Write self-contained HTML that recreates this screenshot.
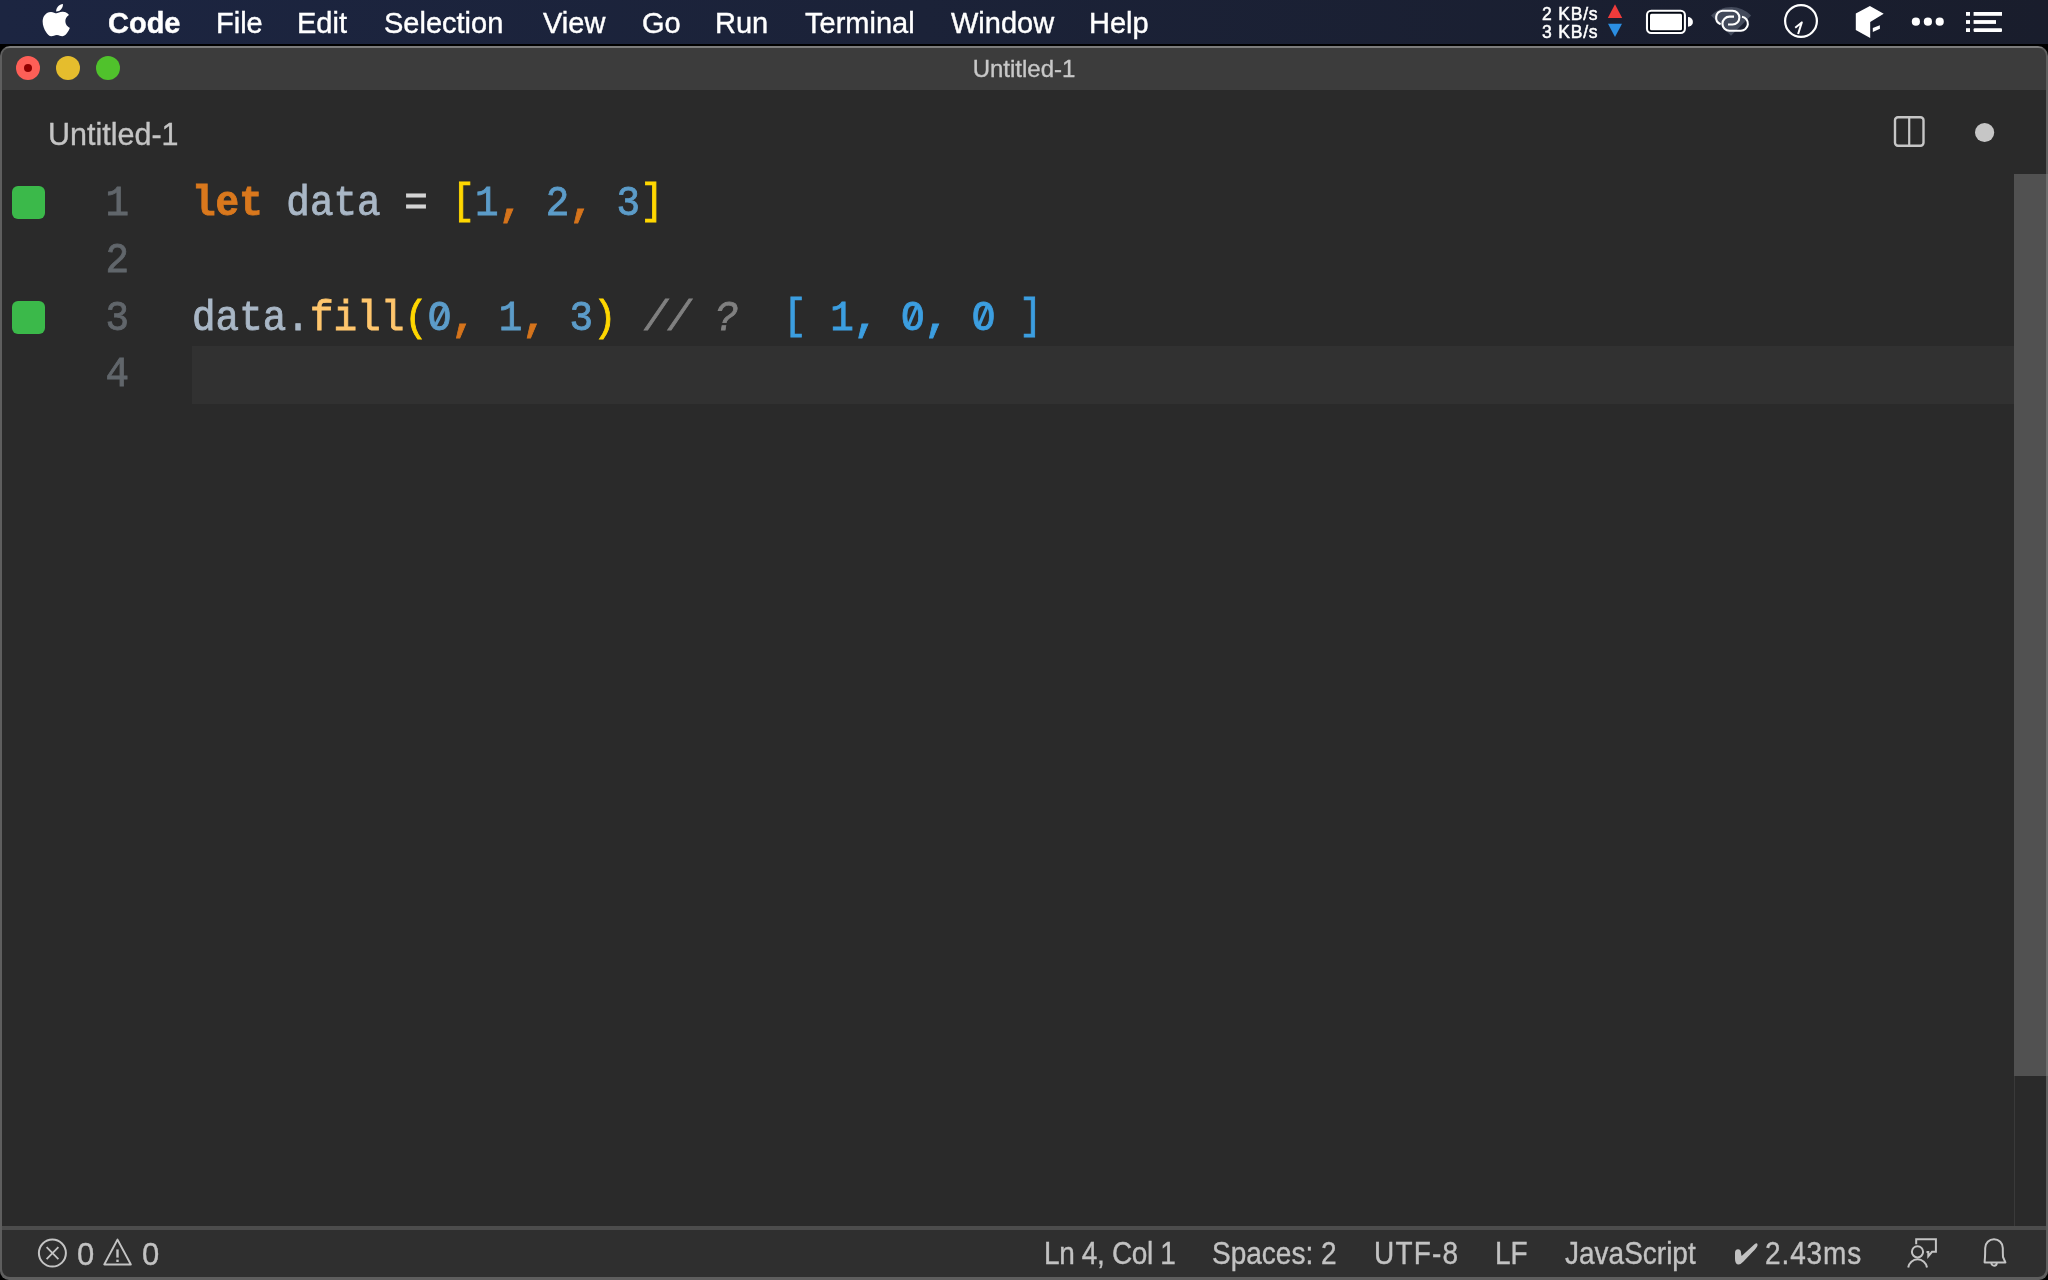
<!DOCTYPE html>
<html><head><meta charset="utf-8">
<style>
*{margin:0;padding:0;box-sizing:border-box}
html,body{width:2048px;height:1280px;overflow:hidden;background:#000}
body{position:relative;font-family:"Liberation Sans",sans-serif}
.mi,.st,.code,.abs{will-change:transform}
.tx{-webkit-text-stroke:0.35px currentColor}
.abs{position:absolute}
#menubar{left:0;top:0;width:2048px;height:44px;background:linear-gradient(90deg,#1c2541 0%,#1b2238 45%,#191d2c 100%)}
.mi{position:absolute;top:1px;height:44px;line-height:44px;color:#fff;font-size:29px;white-space:nowrap;-webkit-text-stroke:0.4px #fff}
#win{left:0;top:46px;width:2048px;height:1234px;background:linear-gradient(#7c7c7c 0,#7c7c7c 2px,#5e5e5e 2px);border-radius:10px 10px 9px 9px;overflow:hidden}
#titlebar{left:2px;top:2px;width:2044px;height:42px;background:#3c3c3c;border-radius:8px 8px 0 0}
#tabbar{left:2px;top:44px;width:2044px;height:84px;background:#2a2a2a}
#editor{left:2px;top:128px;width:2044px;height:1052px;background:#2a2a2a}
#sbborder{left:2px;top:1180px;width:2044px;height:4px;background:#4c4c4c}
#status{left:2px;top:1184px;width:2044px;height:47px;background:#2f2f2f;border-radius:0 0 8px 8px}
.code{position:absolute;font-family:"Liberation Mono",monospace;font-size:39.3px;line-height:57px;white-space:pre;height:57px;transform:scaleY(1.08);transform-origin:0 38.6px;-webkit-text-stroke:0.8px}
.ln{color:#61666b}
.st{-webkit-text-stroke:0.35px currentColor;position:absolute;top:1231px;height:47px;line-height:47px;color:#c2c2c2;font-size:28px;white-space:nowrap;transform:scaleY(1.1);transform-origin:0 32.75px}
svg{position:absolute;overflow:visible}
</style></head><body>
<div id="menubar" class="abs"></div>
<svg style="left:43.5px;top:4px" width="24.5" height="32.3" viewBox="3.2 0 17.6 24" preserveAspectRatio="none"><path fill="#fff" d="M12.152 6.896c-.948 0-2.415-1.078-3.96-1.04-2.040.027-3.910 1.183-4.961 3.014-2.117 3.675-.546 9.103 1.519 12.090 1.013 1.454 2.208 3.090 3.792 3.039 1.520-.065 2.090-.987 3.935-.987 1.831 0 2.350.987 3.960.948 1.637-.026 2.676-1.480 3.676-2.948 1.156-1.688 1.636-3.325 1.662-3.415-.039-.013-3.182-1.221-3.220-4.857-.026-3.040 2.480-4.494 2.597-4.559-1.429-2.090-3.623-2.324-4.390-2.376-2-.156-3.675 1.090-4.610 1.090zM15.530 3.830c.843-1.012 1.400-2.427 1.245-3.830-1.207.052-2.662.805-3.532 1.818-.780.896-1.454 2.338-1.273 3.714 1.338.104 2.715-.688 3.559-1.701"/></svg>
<div class="mi" style="left:108px;font-weight:bold">Code</div>
<div class="mi" style="left:216px">File</div>
<div class="mi" style="left:297px">Edit</div>
<div class="mi" style="left:384px">Selection</div>
<div class="mi" style="left:543px">View</div>
<div class="mi" style="left:642px">Go</div>
<div class="mi" style="left:715px">Run</div>
<div class="mi" style="left:805px">Terminal</div>
<div class="mi" style="left:951px">Window</div>
<div class="mi" style="left:1089px">Help</div>

<!-- menubar right -->
<div class="abs" style="left:1542px;top:5px;color:#fff;font-size:17.5px;letter-spacing:0.8px;-webkit-text-stroke:0.5px #fff;line-height:18px;white-space:nowrap">2 KB/s<br>3 KB/s</div>
<svg style="left:0;top:0" width="2048" height="44">
  <polygon points="1615,4.3 1622.2,18 1607.8,18" fill="#ef3b3b"/>
  <polygon points="1608,23.8 1622,23.8 1615,37" fill="#2b8ee2"/>
  <rect x="1647" y="10.8" width="37.9" height="22.2" rx="4.2" fill="#020712" stroke="#fff" stroke-width="2.1"/>
  <rect x="1650" y="13.8" width="32" height="16.4" rx="1.5" fill="#fff"/>
  <path d="M1688 17 a4.9 4.9 0 0 1 0 9.8z" fill="#fff"/>
  <path d="M1731 35.8 L1711 15.5 A28 28 0 0 1 1751.2 15.5z" fill="#434a5b"/>
  <path d="M1720.6 24.2 A7 7 0 0 1 1722.5 10.7 L1732.5 10.7 A6.9 6.9 0 0 1 1732.5 24.5 L1728 24.5" fill="none" stroke="#fff" stroke-width="2.1"/>
  <path d="M1734 16.6 L1729.5 16.6 A7 7 0 0 0 1729.5 30.7 L1740.5 30.7 A7 7 0 0 0 1742 16.8" fill="none" stroke="#fff" stroke-width="2.1"/>
  <circle cx="1801" cy="21" r="15.9" fill="none" stroke="#fff" stroke-width="2.2"/>
  <path d="M1795.2 27.8 L1801.8 22.4 L1798.1 34" fill="none" stroke="#fff" stroke-width="2" stroke-linejoin="round"/>
  <polygon points="1855.8,13.5 1869.9,5.9 1883.7,13.8 1870.2,22 1870.2,38.1 1855.8,29.9" fill="#fff"/>
  <polygon points="1872.8,28.1 1879.9,25.2 1879.9,28.7 1872.8,31.9" fill="#fff"/>
  <circle cx="1915.9" cy="21.7" r="4.1" fill="#fff"/>
  <circle cx="1927.9" cy="21.7" r="4.1" fill="#fff"/>
  <circle cx="1939.7" cy="21.7" r="4.1" fill="#fff"/>
  <rect x="1966" y="12" width="4" height="3.8" fill="#fff"/>
  <rect x="1966" y="20.1" width="4" height="3.8" fill="#fff"/>
  <rect x="1966" y="28.2" width="4" height="3.8" fill="#fff"/>
  <rect x="1973.6" y="12" width="28.4" height="3.8" fill="#fff"/>
  <rect x="1973.6" y="20.1" width="22.4" height="3.8" fill="#fff"/>
  <rect x="1973.6" y="28.2" width="28.4" height="3.8" rx="1" fill="#fff"/>
</svg>

<div id="win" class="abs">
  <div id="titlebar" class="abs"></div>
  <div id="tabbar" class="abs"></div>
  <div id="editor" class="abs"></div>
  <div id="sbborder" class="abs"></div>
  <div id="status" class="abs"></div>
</div>
<!-- traffic lights -->
<div class="abs" style="left:16px;top:56px;width:24px;height:24px;border-radius:50%;background:#fe5f57"></div>
<div class="abs" style="left:24px;top:64px;width:8px;height:8px;border-radius:50%;background:#900000"></div>
<div class="abs" style="left:56px;top:56px;width:24px;height:24px;border-radius:50%;background:#e5bd2d"></div>
<div class="abs" style="left:96px;top:56px;width:24px;height:24px;border-radius:50%;background:#50c22c"></div>
<div class="abs tx" style="left:0;top:48px;width:2048px;height:42px;line-height:42px;text-align:center;color:#c8c8c8;font-size:24px">Untitled-1</div>
<div class="abs tx" style="left:48px;top:106px;height:56px;line-height:56px;color:#c4c4c4;font-size:30.5px">Untitled-1</div>
<svg style="left:0;top:0" width="2048" height="200">
  <rect x="1895" y="117.2" width="28.5" height="28.5" rx="3" fill="none" stroke="#c6c6c6" stroke-width="2.4"/>
  <line x1="1909.2" y1="117" x2="1909.2" y2="146" stroke="#c6c6c6" stroke-width="2.2"/>
  <circle cx="1984.6" cy="132.5" r="9.6" fill="#c6c6c6"/>
</svg>

<!-- editor content -->
<div class="abs" style="left:192px;top:346px;width:1822px;height:58px;background:#313131"></div>
<div class="abs" style="left:2014px;top:174px;width:32px;height:902px;background:#515151"></div>
<div class="abs" style="left:2014px;top:1076px;width:1px;height:150px;background:#3a3a3a"></div>
<div class="abs" style="left:2046px;top:174px;width:2px;height:902px;background:#6e6e6e"></div>

<div class="abs" style="left:12px;top:186px;width:33px;height:33px;border-radius:6px;background:#3bb94a"></div>
<div class="abs" style="left:12px;top:301px;width:33px;height:33px;border-radius:6px;background:#3bb94a"></div>

<div class="code ln" style="left:82px;top:176px;width:47px;text-align:right">1</div>
<div class="code ln" style="left:82px;top:233px;width:47px;text-align:right">2</div>
<div class="code ln" style="left:82px;top:291px;width:47px;text-align:right">3</div>
<div class="code ln" style="left:82px;top:347px;width:47px;text-align:right">4</div>

<div class="code" style="left:192px;top:176px"><b style="color:#d9781d">let</b><span style="color:#a9b7c6"> data </span><span style="color:#d4d4d4">=</span> <span style="color:#ffd700;position:relative;top:-2.5px">[</span><span style="color:#5c9cc9">1</span><b style="color:#d5741c">,</b> <span style="color:#5c9cc9">2</span><b style="color:#d5741c">,</b> <span style="color:#5c9cc9">3</span><span style="color:#ffd700;position:relative;top:-2.5px">]</span></div>
<div class="code" style="left:192px;top:291px"><span style="color:#a9b7c6">data.</span><span style="color:#ffc66d">fill</span><span style="color:#ffd700">(</span><span style="color:#5c9cc9">O</span><b style="color:#d5741c">,</b> <span style="color:#5c9cc9">1</span><b style="color:#d5741c">,</b> <span style="color:#5c9cc9">3</span><span style="color:#ffd700">)</span></div>
<div class="code" style="left:643.5px;top:291px;color:#808080"><i>// ?</i></div>
<div class="code" style="left:783px;top:291px;color:#3c9ee0"><span style="position:relative;top:-2px">[</span> 1<b>,</b> O<b>,</b> O <span style="position:relative;top:-2px">]</span></div>
<svg style="left:0;top:0" width="1100" height="400"><g stroke-width="3.2" stroke-linecap="butt"><line x1="435.6" y1="325" x2="444.4" y2="308" stroke="#5c9cc9"/><line x1="908.3" y1="325.8" x2="916.6" y2="306.4" stroke="#3c9ee0"/><line x1="978.8" y1="325.8" x2="987.1" y2="306.4" stroke="#3c9ee0"/></g></svg>

<!-- status bar -->
<svg style="left:0;top:0" width="2048" height="1280">
  <g fill="none" stroke="#c4c4c4" stroke-width="2">
    <circle cx="52.4" cy="1253.1" r="13.5"/>
    <path d="M46.6 1247.2 L58.4 1259.2 M58.4 1247.2 L46.6 1259.2" stroke-width="1.8"/>
    <path d="M117.5 1239.6 L104.3 1264.4 L130.8 1264.4 Z" stroke-linejoin="round"/>
    <path d="M117.5 1249.4 L117.5 1257.6" stroke-width="2.4"/>
    <path d="M117.5 1259.6 L117.5 1262" stroke-width="2.4"/>
    <path d="M1916.2 1244.2 L1916.2 1239.2 L1935.9 1239.2 L1935.9 1251.8 L1932 1251.8 L1928.3 1256.3 L1928.3 1252 L1926.5 1252" stroke-linejoin="miter"/>
    <circle cx="1917.5" cy="1251.8" r="5.6"/>
    <path d="M1908.2 1267.5 A9.5 9.5 0 0 1 1927 1267.5"/>
    <path d="M1984.6 1262.4 L2005.4 1262.4 L2003 1257 Q2002.8 1253 2002.8 1248 A8.8 8.8 0 0 0 1985.2 1248 Q1985.2 1253 1985 1257 Z" stroke-linejoin="round"/>
    <path d="M1991.4 1263 A2.7 2.7 0 0 0 1996.8 1263"/>
  </g>
</svg>
<div class="st" style="left:76.6px;top:1230.5px;font-size:31px;transform:none">0</div>
<div class="st" style="left:141.5px;top:1230.5px;font-size:31px;transform:none">0</div>
<div class="st" style="left:1044px;letter-spacing:-0.35px">Ln 4, Col 1</div>
<div class="st" style="left:1212px">Spaces: 2</div>
<div class="st" style="left:1374px;letter-spacing:1.2px">UTF-8</div>
<div class="st" style="left:1495px">LF</div>
<div class="st" style="left:1565px">JavaScript</div>
<svg style="left:0;top:0" width="2048" height="1280"><path fill="#c2c2c2" d="M1735 1253 Q1735 1249.3 1738 1249.3 Q1741 1249.3 1741 1253 L1741.6 1256 L1754.5 1244.2 Q1757.5 1242 1757.6 1245 Q1757.2 1247.5 1752.5 1252 L1743.5 1261.5 Q1740.5 1264.6 1738.6 1264.6 Q1735 1264.3 1735 1259 Z"/></svg>
<div class="st" style="left:1765px;letter-spacing:0.9px">2.43ms</div>
</body></html>
